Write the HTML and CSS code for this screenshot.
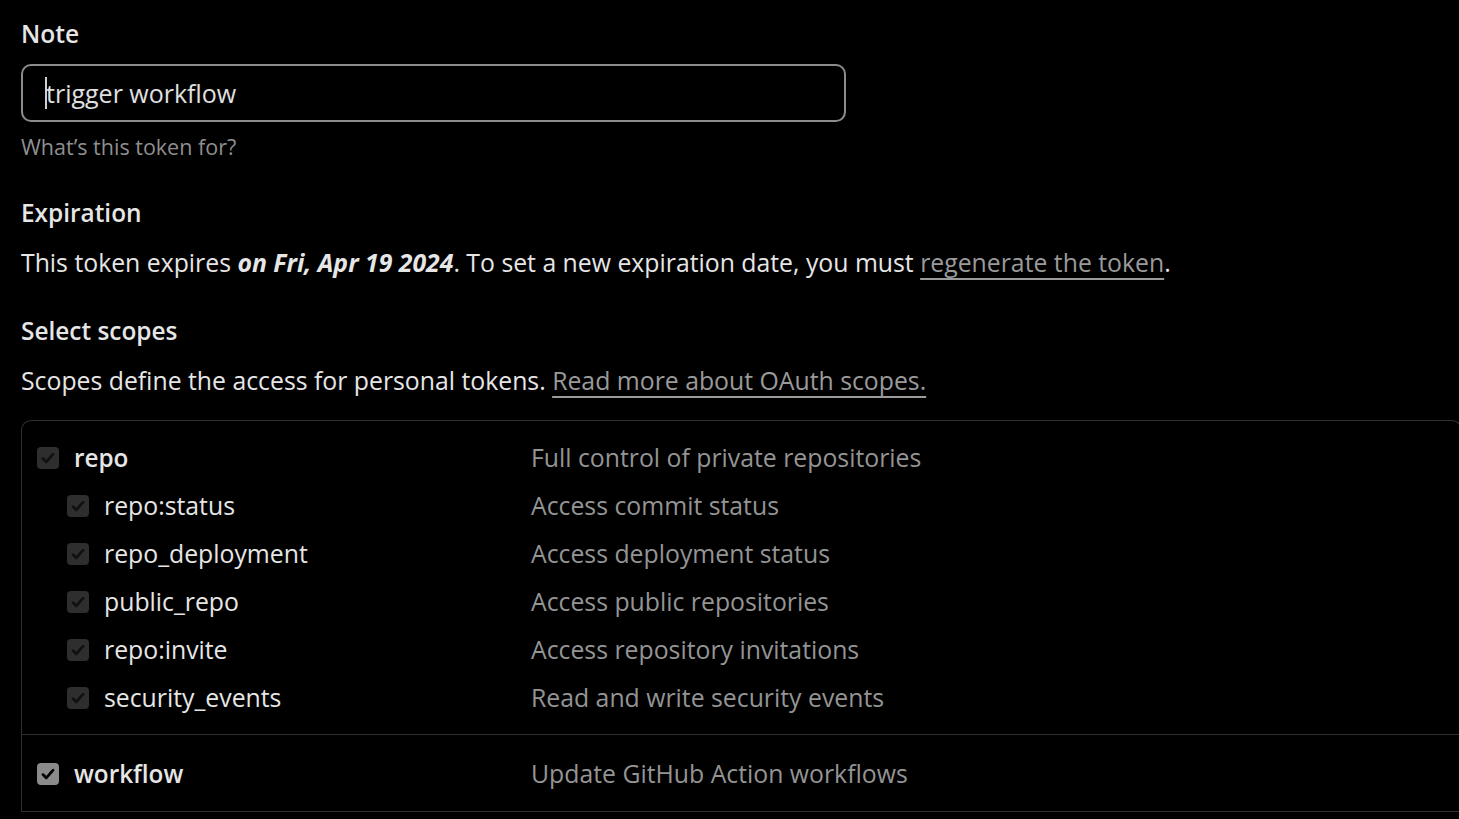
FILE: index.html
```html
<!DOCTYPE html>
<html lang="en">
<head>
<meta charset="utf-8">
<title>Token</title>
<link rel="stylesheet" href="styles.css">
</head>
<body>
<div class="page">
  <div class="label">Note</div>
  <div class="input"><span class="caret"></span>trigger workflow</div>
  <div class="hint">What’s this token for?</div>

  <div class="heading h-exp">Expiration</div>
  <p class="para">This token expires <em>on Fri, Apr 19 2024</em>. To set a new expiration date, you must <a class="link">regenerate the token</a>.</p>

  <div class="heading h-scopes">Select scopes</div>
  <p class="para">Scopes define the access for personal tokens. <a class="link">Read more about OAuth scopes.</a></p>

  <div class="scopes">
    <div class="group">
      <div class="row">
        <div class="name top"><span class="cb disabled"><svg viewBox="0 0 16 16"><path d="M3.5 8.5l3 3 6-7"/></svg></span>repo</div>
        <div class="desc">Full control of private repositories</div>
      </div>
      <div class="row">
        <div class="name sub"><span class="cb disabled"><svg viewBox="0 0 16 16"><path d="M3.5 8.5l3 3 6-7"/></svg></span>repo:status</div>
        <div class="desc">Access commit status</div>
      </div>
      <div class="row">
        <div class="name sub"><span class="cb disabled"><svg viewBox="0 0 16 16"><path d="M3.5 8.5l3 3 6-7"/></svg></span>repo_deployment</div>
        <div class="desc">Access deployment status</div>
      </div>
      <div class="row">
        <div class="name sub"><span class="cb disabled"><svg viewBox="0 0 16 16"><path d="M3.5 8.5l3 3 6-7"/></svg></span>public_repo</div>
        <div class="desc">Access public repositories</div>
      </div>
      <div class="row">
        <div class="name sub"><span class="cb disabled"><svg viewBox="0 0 16 16"><path d="M3.5 8.5l3 3 6-7"/></svg></span>repo:invite</div>
        <div class="desc">Access repository invitations</div>
      </div>
      <div class="row">
        <div class="name sub"><span class="cb disabled"><svg viewBox="0 0 16 16"><path d="M3.5 8.5l3 3 6-7"/></svg></span>security_events</div>
        <div class="desc">Read and write security events</div>
      </div>
    </div>
    <div class="group g2">
      <div class="row">
        <div class="name top"><span class="cb checked"><svg viewBox="0 0 16 16"><path d="M3.5 8.5l3 3 6-7"/></svg></span>workflow</div>
        <div class="desc">Update GitHub Action workflows</div>
      </div>
    </div>
  </div>
</div>
</body>
</html>
```

FILE: styles.css
```css
html, body {
  margin: 0;
  padding: 0;
  background: #000;
  overflow: hidden;
}
body {
  width: 1459px;
  height: 819px;
  font-family: "Open Sans", "Noto Sans", sans-serif;
  color: #e6e6e6;
  font-size: 24.8px;
}
.page {
  padding: 18px 0 0 21px;
}
.label {
  font-weight: 600;
  font-size: 24.6px;
  line-height: 32px;
  margin-bottom: 14px;
}
.input {
  box-sizing: border-box;
  width: 825px;
  height: 58px;
  border: 2px solid #8c8c8c;
  border-radius: 10px;
  padding-left: 22px;
  display: flex;
  align-items: center;
  font-size: 25px;
  color: #e0e0e0;
}
.caret {
  display: inline-block;
  width: 2px;
  height: 32px;
  background: #d0d0d0;
  margin-right: -1px;
}
.hint {
  margin-top: 10px;
  line-height: 30px;
  font-size: 21.5px;
  color: #8f8f8f;
}
.heading {
  font-weight: 600;
  font-size: 24.4px;
  line-height: 32px;
}
.h-exp { margin-top: 35px; }
.h-scopes { margin-top: 37px; }
.para {
  margin: 17px 0 0;
  line-height: 32px;
  font-size: 24.8px;
}
.para em {
  font-style: italic;
  font-weight: 700;
}
.link {
  color: #9a9a9a;
  text-decoration: underline;
  text-decoration-thickness: 2px;
  text-underline-offset: 6px;
}
.scopes {
  margin-top: 24px;
  width: 1441px;
  box-sizing: border-box;
  border: 1px solid #2f2f2f;
  border-radius: 10px 10px 0 0;
  border-bottom: none;
}
.group {
  padding: 12px 0 13px 15px;
  border-bottom: 1px solid #2f2f2f;
}
.g2 {
  padding-top: 14px;
  padding-bottom: 14px;
}
.row {
  display: grid;
  grid-template-columns: 494px 1fr;
  height: 48px;
  align-items: center;
}
.name {
  display: flex;
  align-items: center;
  gap: 15px;
  font-size: 24.8px;
  color: #e6e6e6;
}
.name.top {
  font-weight: 600;
  font-size: 24.3px;
}
.name.sub {
  padding-left: 30px;
}
.desc {
  color: #949494;
  font-size: 24.8px;
}
.cb {
  width: 22px;
  height: 22px;
  border-radius: 4px;
  display: inline-flex;
  align-items: center;
  justify-content: center;
  flex: none;
  margin-top: 2px;
}
.cb svg {
  width: 18px;
  height: 18px;
  fill: none;
  stroke-width: 2.4;
  stroke-linecap: round;
  stroke-linejoin: round;
}
.cb.disabled {
  background: #2e2e2e;
}
.cb.disabled svg { stroke: #111; }
.cb.checked {
  background: #8a8a8a;
}
.cb.checked svg { stroke: #000; }
```
